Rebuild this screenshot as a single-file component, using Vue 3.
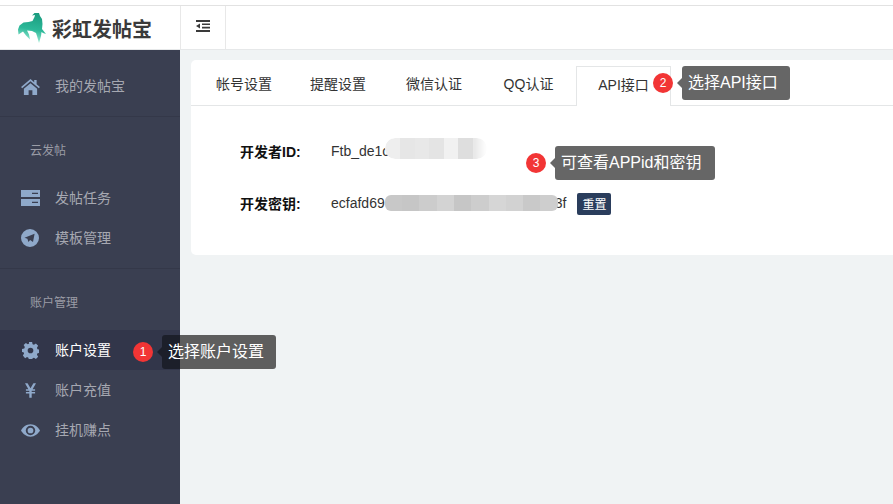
<script setup>
const tabs = [
  { label: '帐号设置', w: 90 },
  { label: '提醒设置', w: 98 },
  { label: '微信认证', w: 94 },
  { label: 'QQ认证', w: 95 },
  { label: 'API接口', w: 95, active: true }
]
const idCells = ['#eeeeee', '#e6e6e6', '#e8e8e8', '#e4e4e4', '#f1f1f1', '#dedede', '#e9e9e9']
const keyCells = ['#c8c8c8', '#c6c6c6', '#cccccc', '#d3d3d3', '#c6c6c6', '#cdcdcd', '#d6d6d6', '#d2d2d2', '#c9c9c9', '#cecece']
</script>

<template>
  <div class="page">
    <header class="topbar">
      <div class="brand">
        <svg class="logo" viewBox="16 12 31 31" width="31" height="31">
          <defs>
            <linearGradient id="horse" x1="0.6" y1="0" x2="0.45" y2="1">
              <stop offset="0" stop-color="#1a9a7e" />
              <stop offset="0.55" stop-color="#2bb898" />
              <stop offset="1" stop-color="#a5efd9" />
            </linearGradient>
          </defs>
          <path fill="url(#horse)" d="M39 12l1 3 2 3 .5 5-.5 5 4 5-3-1-1.500-1-.5 4-2 7-2-7-1-3-4-2-5-.5 2 4 1 5-4-4-3-4-3 2-1.500 1-.5-5 1.500-4 4-3 5-.5 4-1 2-4 .5-2-3 .5 3-3z" />
        </svg>
        <span class="brand-name">彩虹发帖宝</span>
      </div>
      <button class="toggle" aria-label="菜单">
        <svg viewBox="0 0 14 12" width="14" height="12">
          <path fill="#3a3a3a" d="M0 0h14v2H0zM6 3.400h8v1.700H6zM6 6.700h8v1.700H6zM0 10h14v2H0zM4 3.500v5L0 6z" />
        </svg>
      </button>
    </header>

    <div class="body">
      <aside class="sidebar">
        <section class="group first">
          <a class="item">
            <svg class="ico" viewBox="0 0 20 18" width="19" height="17"><path d="M10 1L0 9.500l1.200 1.300L10 3.400l8.800 7.400L20 9.500 16.500 6.600V2h-2.600v2.400zM3 11.500V18h5v-5h4v5h5v-6.500L10 5.500z" /></svg>
            <span>我的发帖宝</span>
          </a>
        </section>
        <section class="group">
          <div class="caption">云发帖</div>
          <a class="item">
            <svg class="ico" viewBox="0 0 19 16" width="19" height="16"><path fill-rule="evenodd" d="M0 0h19v7H0zM0 9h19v7H0zM11 2.800v1.200h6V2.800zM11 11.800v1.200h6v-1.200z" /></svg>
            <span>发帖任务</span>
          </a>
          <a class="item">
            <svg class="ico" viewBox="0 0 18 18" width="18" height="18"><path fill-rule="evenodd" d="M9 0a9 9 0 1 1 0 18A9 9 0 0 1 9 0zM13.600 4.800L3.500 8.800l2.900 1 1 3.200 1.700-2 2.900 2.100z" /></svg>
            <span>模板管理</span>
          </a>
        </section>
        <section class="group plain">
          <div class="caption">账户管理</div>
          <a class="item active">
            <svg class="ico" viewBox="0 0 18 18" width="17" height="17"><path fill-rule="evenodd" d="M7.300 0h3.400l.5 2.400 1.500.6 2-1.300 2.400 2.400-1.300 2 .6 1.500 2.400.5v3.400l-2.400.5-.6 1.500 1.300 2-2.400 2.400-2-1.300-1.500.6-.5 1.800H7.300l-.5-2.400-1.500-.6-2 1.300L.9 14.300l1.300-2-.6-1.500L0 10.700V7.300l2.400-.5.6-1.500-1.300-2L4.100 1l2 1.300 1.500-.6zM9 6a3 3 0 1 0 0 6 3 3 0 0 0 0-6z" /></svg>
            <span>账户设置</span>
          </a>
          <a class="item">
            <svg class="ico" viewBox="0 0 12 16" width="11" height="15"><path d="M0 0h2.800L6 5.600 9.200 0H12L8.300 6.500H11v1.700H7.300v1.500H11v1.700H7.300V16H4.700v-4.600H1V9.700h3.700V8.200H1V6.500h2.700z" /></svg>
            <span>账户充值</span>
          </a>
          <a class="item">
            <svg class="ico" viewBox="0 0 20 13" width="19" height="13"><path fill-rule="evenodd" d="M10 0c4.500 0 8 3 10 6.500C18 10 14.500 13 10 13S2 10 0 6.500C2 3 5.500 0 10 0zM10 1.500a5 5 0 1 0 0 10 5 5 0 0 0 0-10zM10 3.500a3 3 0 1 1 0 6 3 3 0 0 1 0-6z" /></svg>
            <span>挂机赚点</span>
          </a>
        </section>
      </aside>

      <main class="content">
        <div class="panel">
          <nav class="tabs">
            <a v-for="t in tabs" :key="t.label" class="tab" :class="{ on: t.active }" :style="{ width: t.w + 'px' }">{{ t.label }}</a>
          </nav>
          <div class="form">
            <div class="row">
              <b>开发者ID:</b>
              <span class="value">Ftb_de1c<i class="mosaic light"><u v-for="(c, i) in idCells" :key="i" :style="{ background: c }"></u></i></span>
            </div>
            <div class="row">
              <b>开发密钥:</b>
              <span class="value">ecfafd69<i class="mosaic dark"><u v-for="(c, i) in keyCells" :key="i" :style="{ background: c }"></u></i><em>3f</em></span>
              <button class="reset">重置</button>
            </div>
          </div>
        </div>
      </main>
    </div>

    <div class="note n1"><span class="dot">1</span><span class="tip">选择账户设置</span></div>
    <div class="note n2"><span class="dot">2</span><span class="tip">选择API接口</span></div>
    <div class="note n3"><span class="dot">3</span><span class="tip">可查看APPid和密钥</span></div>
  </div>
</template>

<style>
html, body { margin: 0; background: #fff; }
</style>

<style scoped>
.page {
  position: relative;
  width: 893px;
  height: 504px;
  overflow: hidden;
  font-family: "Liberation Sans", "Noto Sans CJK SC", sans-serif;
  font-size: 14px;
  color: #222;
}
.topbar {
  box-sizing: border-box;
  height: 50px;
  padding-top: 5px;
  display: flex;
  background: linear-gradient(#fff 0 5px, #e2e2e2 5px 6px, #fff 6px);
  border-bottom: 1px solid #e6e8e9;
}
.brand {
  box-sizing: border-box;
  width: 181px;
  display: flex;
  align-items: center;
  margin-top: 1px;
  padding: 1px 0 0 16px;
  border-right: 1px solid #e8e8e8;
}
.logo { flex: none; margin-right: 5px; }
.brand-name {
  font-size: 20px;
  font-weight: 700;
  color: #3a3a3a;
  white-space: nowrap;
  padding-top: 1px;
}
.toggle {
  box-sizing: border-box;
  width: 45px;
  margin: 1px 0 0;
  padding: 0 0 3px;
  border: 0;
  border-right: 1px solid #e8e8e8;
  background: #fff;
  display: flex;
  align-items: center;
  justify-content: center;
}
.body { display: flex; height: 454px; }
.sidebar {
  flex: none;
  width: 180px;
  background: #3a3f51;
  color: #a6a8b1;
}
.group { border-bottom: 1px solid #343849; padding: 23px 0 10px; }
.group.first { padding: 16px 0 10px; }
.group.plain { border-bottom: 0; }
.caption {
  height: 20px;
  line-height: 22px;
  padding-left: 30px;
  margin-bottom: 18px;
  font-size: 12px;
  color: #9a9ca6;
}
.item {
  display: grid;
  grid-template-columns: 20px 1fr;
  column-gap: 15px;
  align-items: center;
  justify-items: center;
  height: 40px;
  padding-left: 20px;
  font-size: 14px;
  color: #a6a8b1;
}
.item span { justify-self: start; white-space: nowrap; padding-bottom: 2px; }
.ico { fill: #8fa9ca; }
.active { background: #32364a; color: #fff; }
.content {
  flex: 1;
  min-width: 0;
  background: #f0f3f4;
  padding: 10px 0 0 11px;
}
.panel {
  height: 195px;
  background: #fff;
  border-radius: 5px 0 0 5px;
}
.tabs {
  display: flex;
  box-sizing: border-box;
  height: 46px;
  padding: 6px 0 0 8px;
  border-bottom: 1px solid #e4e6e7;
}
.tab {
  box-sizing: border-box;
  height: 40px;
  line-height: 37px;
  text-align: center;
  font-size: 14px;
  color: #333;
  white-space: nowrap;
  flex: none;
}
.tab.on {
  border: 1px solid #e4e6e7;
  border-bottom: 0;
  background: #fff;
  position: relative;
}
.form { padding: 18px 0 0 49px; }
.row {
  display: flex;
  align-items: center;
  height: 53px;
  white-space: nowrap;
}
.row + .row { margin-top: -1px; }
.row b {
  width: 91px;
  font-size: 14px;
  font-weight: 700;
  color: #111;
  flex: none;
}
.value {
  display: flex;
  align-items: center;
  font-size: 14px;
  color: #333;
}
.value em { font-style: normal; margin-left: -3px; }
.mosaic { display: flex; overflow: hidden; font-style: normal; position: relative; }
.mosaic u { flex: 1; display: block; height: 100%; }
.mosaic.light {
  width: 102px;
  height: 21px;
  margin: -4px 0 0 -4px;
  border-radius: 10px;
  -webkit-mask-image: linear-gradient(90deg, #000 88%, transparent);
  mask-image: linear-gradient(90deg, #000 88%, transparent);
}
.mosaic.dark {
  width: 173px;
  height: 16px;
  border-radius: 6px;
}
.reset {
  box-sizing: border-box;
  width: 34px;
  height: 22px;
  margin: 2px 0 0 11px;
  padding: 0;
  border: 0;
  border-radius: 2px;
  background: #2a3d5c;
  color: #fff;
  font: 12px "Liberation Sans", "Noto Sans CJK SC", sans-serif;
}
.note {
  position: absolute;
  display: flex;
  align-items: center;
}
.n1 { left: 133px; top: 335px; }
.n2 { left: 653px; top: 66px; }
.n3 { left: 526px; top: 146px; }
.dot {
  flex: none;
  width: 20px;
  height: 20px;
  border-radius: 50%;
  background: #f23535;
  color: #fff;
  font-size: 12px;
  line-height: 20px;
  text-align: center;
}
.tip {
  position: relative;
  box-sizing: border-box;
  height: 34px;
  line-height: 34px;
  margin-left: 9px;
  padding: 0 12px 0 6px;
  border-radius: 3px;
  background: #666;
  color: #fff;
  font-size: 16px;
  white-space: nowrap;
}
.n3 .tip { padding-right: 14px; }
.tip::before {
  content: "";
  position: absolute;
  left: -5px;
  top: 12px;
  border-style: solid;
  border-width: 5px 5px 5px 0;
  border-color: transparent #666 transparent transparent;
}
.n1 .tip { background: linear-gradient(90deg, #1c1f2a 18px, #5e5e5e 18px); }
.n1 .tip::before { border-right-color: #1c1f2a; }
</style>
